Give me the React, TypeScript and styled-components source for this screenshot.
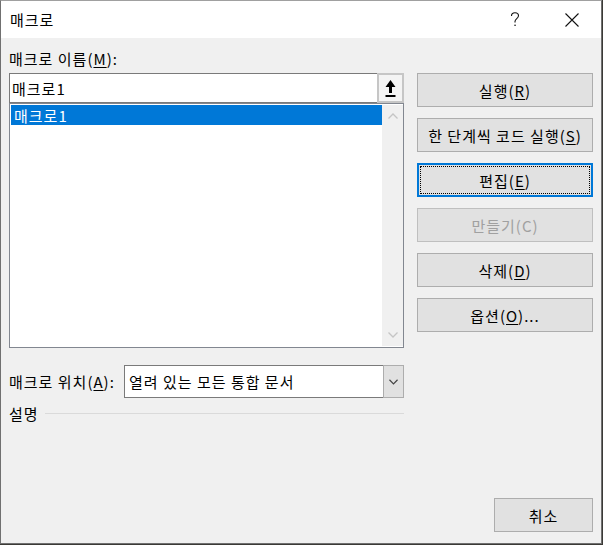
import React from "react";
import styled, { createGlobalStyle, css } from "styled-components";

const Global = createGlobalStyle`
  html, body { margin: 0; padding: 0; background: #3b3a36; }
  body { font-family: "Noto Sans CJK KR", "Noto Sans", sans-serif; }
  * { box-sizing: border-box; }
`;

const FONT = `"Noto Sans CJK KR", "Noto Sans", sans-serif`;

const Window = styled.div`
  width: 602px;
  height: 544px;
  border: 1px solid #707070;
  border-top-color: #a0a0a0;
  background: #f0f0f0;
  display: flex;
  flex-direction: column;
  font-family: ${FONT};
  font-size: 15px;
  letter-spacing: 1px;
  color: #000;
`;

const TitleBar = styled.div`
  height: 37px;
  background: #fff;
  display: flex;
  align-items: center;
  padding-left: 9px;
`;

const Title = styled.div`
  flex: 1;
  margin-top: -1px;
`;

const TitleButton = styled.div<{ $w: number }>`
  width: ${(p) => p.$w}px;
  height: 37px;
  display: flex;
  align-items: center;
  justify-content: center;
`;

const Body = styled.div`
  flex: 1;
  display: flex;
  flex-direction: column;
  padding: 0 8px 11px 8px;
`;

const FieldLabel = styled.div`
  height: 35px;
  line-height: 1;
  padding-top: 13px;
`;

const Main = styled.div`
  display: flex;
  gap: 13px;
`;

const LeftCol = styled.div`
  width: 395px;
  display: flex;
  flex-direction: column;
`;

const RightCol = styled.div`
  width: 176px;
  display: flex;
  flex-direction: column;
  gap: 11px;
`;

const NameBox = styled.div`
  height: 30px;
  border: 1px solid #7a7a7a;
  background: #fff;
  display: flex;
  align-items: stretch;
`;

const NameText = styled.div`
  flex: 1;
  padding-left: 2px;
  display: flex;
  align-items: center;
`;

const PickButton = styled.div`
  width: 27px;
  margin: -1px -1px -1px 0;
  border: 2px solid #c6c6c6;
  background: #f4f4f4;
  display: flex;
  align-items: center;
  justify-content: center;
`;

const List = styled.div`
  height: 245px;
  border: 1px solid #828790;
  background: #fff;
  display: flex;
  padding: 1px 0 1px 1px;
`;

const ListItems = styled.div`
  flex: 1;
  display: flex;
  flex-direction: column;
`;

const ListItem = styled.div<{ $selected?: boolean }>`
  height: 20px;
  padding-left: 3px;
  display: flex;
  align-items: center;
  ${(p) =>
    p.$selected &&
    css`
      background: #0078d7;
      color: #fff;
    `}
`;

const ScrollBar = styled.div`
  width: 21px;
  background: #f0f0f0;
  display: flex;
  flex-direction: column;
  justify-content: space-between;
  align-items: center;
  padding: 8px 0 8px;
`;

const LocationRow = styled.div`
  margin-top: 17px;
  display: flex;
  align-items: center;
  height: 33px;
`;

const LocationLabel = styled.div`
  width: 115px;
`;

const Combo = styled.div`
  flex: 1;
  height: 33px;
  border: 1px solid #7a7a7a;
  background: #fff;
  display: flex;
`;

const ComboText = styled.div`
  flex: 1;
  padding-left: 4px;
  display: flex;
  align-items: center;
`;

const ComboButton = styled.div`
  width: 21px;
  margin: -1px -1px -1px 0;
  border: 1px solid #adadad;
  background: #e1e1e1;
  display: flex;
  align-items: center;
  justify-content: center;
`;

const DescRow = styled.div`
  margin-top: 5px;
  display: flex;
  align-items: center;
  gap: 6px;
`;

const Rule = styled.div`
  flex: 1;
  height: 1px;
  background: #dadada;
`;

const Button = styled.div<{ $focus?: boolean; $disabled?: boolean; $w?: number }>`
  height: 34px;
  width: ${(p) => (p.$w ? `${p.$w}px` : "auto")};
  border: 1px solid #adadad;
  background: #e1e1e1;
  display: flex;
  align-items: center;
  justify-content: center;
  position: relative;
  white-space: nowrap;
  color: ${(p) => (p.$disabled ? "#a0a0a0" : "#000")};
  border-color: ${(p) => (p.$disabled ? "#bfbfbf" : "#adadad")};
  ${(p) =>
    p.$focus &&
    css`
      border: 2px solid #0078d7;
      &::after {
        content: "";
        position: absolute;
        inset: 1px;
        border: 1px dotted #000;
      }
    `}
`;

const Footer = styled.div`
  margin-top: auto;
  display: flex;
  justify-content: flex-end;
`;

const Key = styled.span`
  text-decoration: underline;
  text-underline-offset: 2px;
`;

const Chevron = ({ up, color, w = 10 }: { up?: boolean; color: string; w?: number }) => (
  <svg width={w} height={6} viewBox="0 0 10 6">
    <path
      d={up ? "M0.5 5.5 L5 1 L9.5 5.5" : "M0.5 0.5 L5 5 L9.5 0.5"}
      fill="none"
      stroke={color}
      strokeWidth={1.3}
    />
  </svg>
);

const labelWithKey = (before: string, key: string, after = "") => (
  <>
    {before}(<Key>{key}</Key>){after}
  </>
);

export default function App() {
  return (
    <>
      <Global />
      <Window>
        <TitleBar>
          <Title>매크로</Title>
          <TitleButton $w={68}>
            <svg width="10" height="15" viewBox="0 0 10 15">
              <path
                d="M1.5 4 C1.5 1.5 3 0.8 5 0.8 C7.2 0.8 8.5 2 8.5 3.8 C8.5 6.5 5 6.8 5 9.5 L5 10.5"
                fill="none"
                stroke="#111"
                strokeWidth="1.1"
              />
              <rect x="4.4" y="12.6" width="1.3" height="1.4" fill="#111" />
            </svg>
          </TitleButton>
          <TitleButton $w={46}>
            <svg width="14" height="14" viewBox="0 0 14 14">
              <path d="M0.5 0.5 L13.5 13.5 M13.5 0.5 L0.5 13.5" stroke="#111" strokeWidth="1.1" />
            </svg>
          </TitleButton>
          <TitleButton $w={6} />
        </TitleBar>
        <Body>
          <FieldLabel>매크로 이름{labelWithKey("", "M", ":")}</FieldLabel>
          <Main>
            <LeftCol>
              <NameBox>
                <NameText>매크로1</NameText>
                <PickButton>
                  <svg width="11" height="17" viewBox="0 0 11 17">
                    <path d="M5.5 0 L10.5 7 L7 7 L7 13 L4 13 L4 7 L0.5 7 Z" fill="#000" />
                    <rect x="0.5" y="15" width="10" height="2" fill="#000" />
                  </svg>
                </PickButton>
              </NameBox>
              <List>
                <ListItems>
                  <ListItem $selected>매크로1</ListItem>
                </ListItems>
                <ScrollBar>
                  <Chevron up color="#c5c5c5" />
                  <Chevron color="#c5c5c5" />
                </ScrollBar>
              </List>
              <LocationRow>
                <LocationLabel>매크로 위치{labelWithKey("", "A", ":")}</LocationLabel>
                <Combo>
                  <ComboText>열려 있는 모든 통합 문서</ComboText>
                  <ComboButton>
                    <Chevron color="#444" w={9} />
                  </ComboButton>
                </Combo>
              </LocationRow>
              <DescRow>
                <span>설명</span>
                <Rule />
              </DescRow>
            </LeftCol>
            <RightCol>
              <Button>실행{labelWithKey("", "R")}</Button>
              <Button>한 단계씩 코드 실행{labelWithKey("", "S")}</Button>
              <Button $focus>편집{labelWithKey("", "E")}</Button>
              <Button $disabled>만들기(C)</Button>
              <Button>삭제{labelWithKey("", "D")}</Button>
              <Button>옵션{labelWithKey("", "O", "...")}</Button>
            </RightCol>
          </Main>
          <Footer>
            <Button $w={99}>취소</Button>
          </Footer>
        </Body>
      </Window>
    </>
  );
}
